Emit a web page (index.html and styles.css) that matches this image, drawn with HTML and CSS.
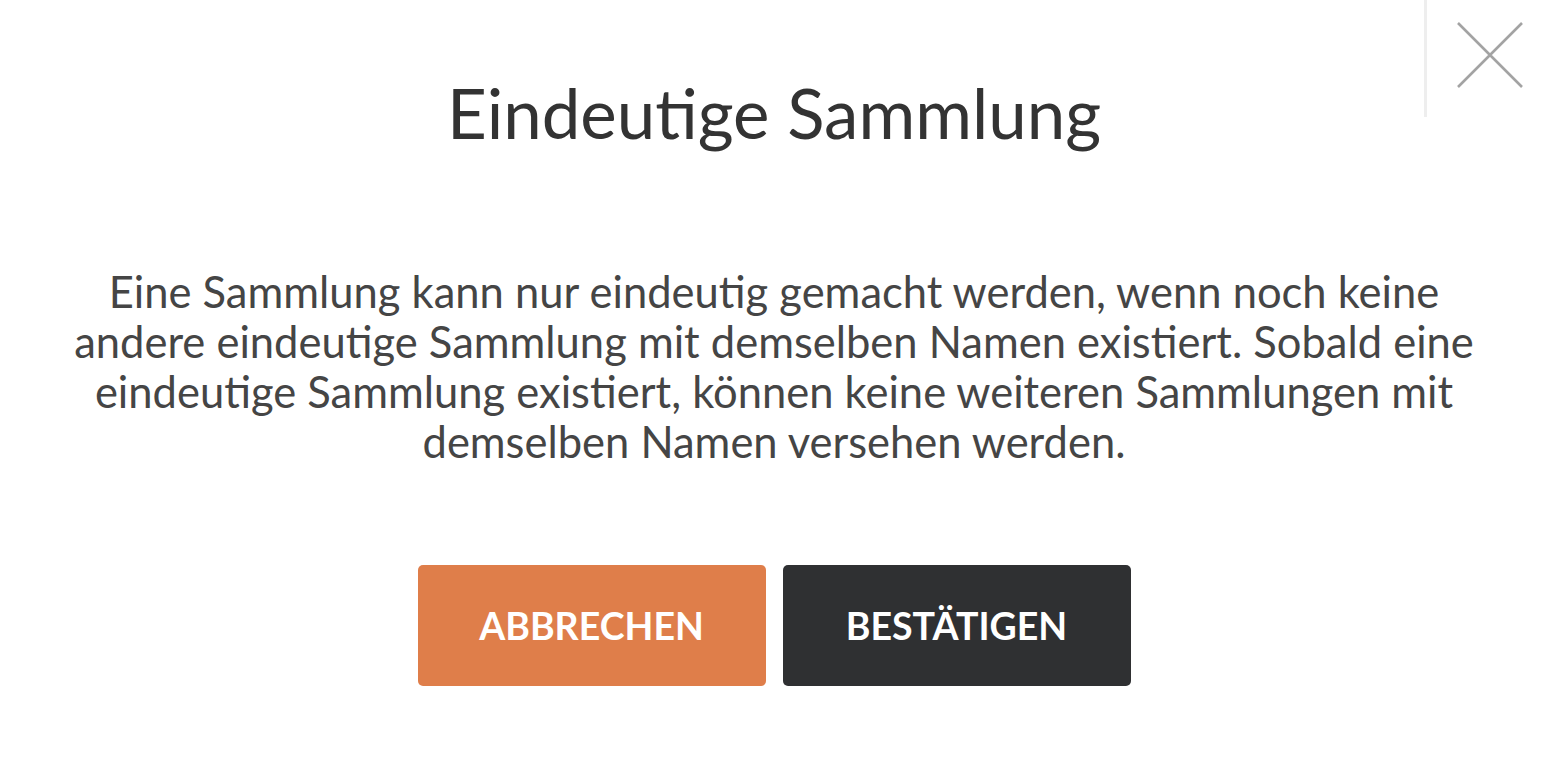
FILE: index.html
```html
<!DOCTYPE html>
<html lang="de">
<head>
<meta charset="utf-8">
<title>Eindeutige Sammlung</title>
<link rel="stylesheet" href="styles.css">
</head>
<body>
<div class="modal">
  <div class="close-area">
    <span class="divider"></span>
    <button class="close" aria-label="Schließen">
      <svg width="68" height="68" viewBox="0 0 68 68"><path d="M2 2 L66 66 M66 2 L2 66" stroke="#a3a3a3" stroke-width="2.6" fill="none"/></svg>
    </button>
  </div>
  <h1 class="title">Eindeutige Sammlung</h1>
  <p class="text">Eine Sammlung kann nur eindeutig gemacht werden, wenn noch keine andere eindeutige Sammlung mit demselben Namen existiert. Sobald eine eindeutige Sammlung existiert, können keine weiteren Sammlungen mit demselben Namen versehen werden.</p>
  <div class="actions">
    <button class="btn btn-cancel">ABBRECHEN</button>
    <button class="btn btn-confirm">BESTÄTIGEN</button>
  </div>
</div>
</body>
</html>
```
FILE: styles.css
```css
html, body {
  margin: 0;
  padding: 0;
  background: #ffffff;
}
body {
  font-family: Lato, "Open Sans", sans-serif;
  width: 1548px;
  height: 772px;
  overflow: hidden;
}
.modal {
  position: relative;
  display: flex;
  flex-direction: column;
  align-items: center;
  padding-top: 72px;
}
.close-area {
  position: absolute;
  top: 0;
  right: 0;
  width: 124px;
  height: 118px;
}
.divider {
  position: absolute;
  left: 0;
  top: 0;
  width: 3px;
  height: 117px;
  background: #eeeeee;
}
.close {
  position: absolute;
  left: 32px;
  top: 21px;
  padding: 0;
  border: 0;
  background: none;
  width: 68px;
  height: 68px;
}
.close svg { display: block; }
.title {
  margin: 0;
  font-weight: 400;
  font-size: 69px;
  line-height: 1.2;
  color: #333333;
}
.text {
  margin: 111px 0 0;
  padding: 0 64px;
  text-align: center;
  font-size: 43.5px;
  line-height: 50px;
  color: #454545;
}
.actions {
  display: flex;
  gap: 17px;
  margin-top: 99px;
}
.btn {
  width: 348px;
  height: 121px;
  border: 0;
  border-radius: 5px;
  color: #ffffff;
  font-family: Lato, sans-serif;
  font-weight: 700;
  font-size: 37.5px;
}
.btn-cancel { background: #df7e4a; }
.btn-confirm { background: #2f3032; }
```
